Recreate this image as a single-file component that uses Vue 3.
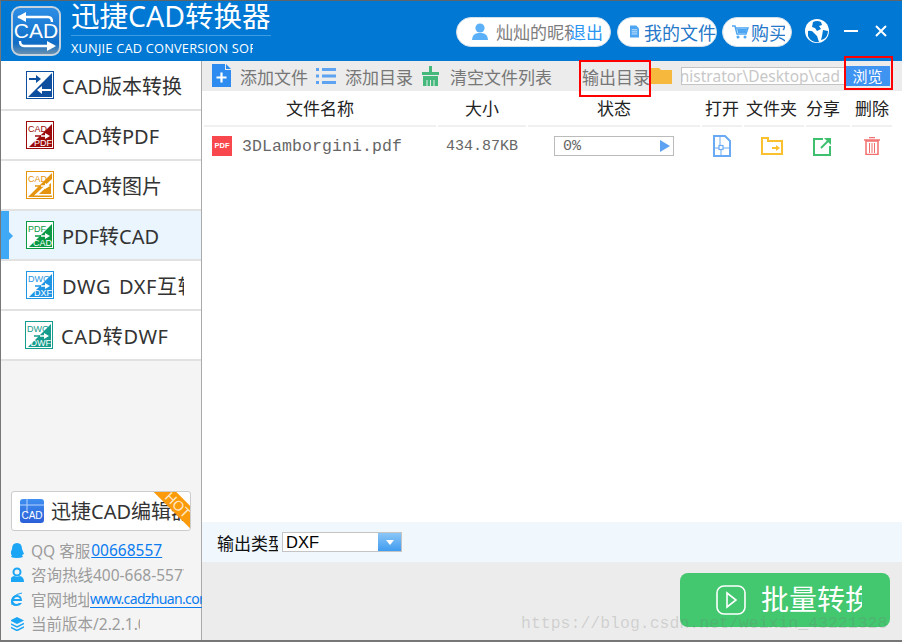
<script setup>
const menu = [
  { label: 'CAD版本转换', color: '#0d4f9e' },
  { label: 'CAD转PDF', color: '#9c0b0b', top: 'CAD', bottom: 'PDF' },
  { label: 'CAD转图片', color: '#e5940f', top: 'CAD', outline: true },
  { label: 'PDF转CAD', color: '#0b9a43', top: 'PDF', bottom: 'CAD', active: true },
  { label: 'DWG DXF互转', color: '#1f95e3', top: 'DWG', bottom: 'DXF', wide: true },
  { label: 'CAD转DWF', color: '#159c8c', top: 'DWG', bottom: 'DWF', shift: true, wide: true }
]

const columns = [
  { label: '文件名称', cls: 'c-name' },
  { label: '大小', cls: 'c-size' },
  { label: '状态', cls: 'c-state' },
  { label: '打开', cls: 'c-open' },
  { label: '文件夹', cls: 'c-dir' },
  { label: '分享', cls: 'c-share' },
  { label: '删除', cls: 'c-del' }
]
</script>

<template>
  <div class="win">
    <header class="head">
      <svg class="logo" width="50" height="50" viewBox="0 0 50 50">
        <defs>
          <linearGradient id="lg" x1="0" y1="0" x2="0" y2="1">
            <stop offset="0" stop-color="#2f8fe6" />
            <stop offset="0.75" stop-color="#0f6dc6" />
            <stop offset="1" stop-color="#6f93ae" />
          </linearGradient>
          <linearGradient id="eg" x1="0" y1="0" x2="0" y2="1">
            <stop offset="0" stop-color="#3f8ff0" />
            <stop offset="1" stop-color="#2a5fd8" />
          </linearGradient>
        </defs>
        <rect x="1" y="1" width="48" height="48" rx="8" fill="url(#lg)" stroke="#c5d3de" stroke-width="2" />
        <path d="M7 11h30q4 0 4 5" fill="none" stroke="#fff" stroke-width="2.400" />
        <path d="M6 11l9-5v10z" fill="#fff" />
        <path d="M43 40H13q-4 0-4-5" fill="none" stroke="#fff" stroke-width="2.400" />
        <path d="M45 40l-9-5v10z" fill="#fff" />
        <text x="25" y="32" text-anchor="middle" class="logo-txt">CAD</text>
      </svg>
      <div class="brand">
        <div class="brand-title">迅捷CAD转换器</div>
        <div class="brand-sub">XUNJIE CAD CONVERSION SOFTWARE</div>
      </div>
      <div class="pill pill-user">
        <svg width="16" height="18" viewBox="0 0 16 18"><circle cx="8" cy="5" r="4.600" fill="#5cb0f7" /><path d="M0 17q0-6 6-7h4q6 1 6 7z" fill="#5cb0f7" /></svg>
        <span class="nick">灿灿的昵称</span><span class="logout">退出</span>
      </div>
      <div class="pill pill-files">
        <svg width="13" height="17" viewBox="0 0 13 17"><path d="M0 0h9l4 4v13H0z" fill="#4ea6f2" /><path d="M2.500 6h8M2.500 9h8M2.500 12h8" stroke="#fff" /></svg>
        <span class="pill-txt">我的文件</span>
      </div>
      <div class="pill pill-buy">
        <svg width="17" height="16" viewBox="0 0 17 16"><path d="M0 2h3l2 8h9l2-6H4" fill="none" stroke="#4ea6f2" stroke-width="1.500" /><path d="M5 5h10l-1 4H6z" fill="#4ea6f2" /><circle cx="6" cy="13" r="1.500" fill="#4ea6f2" /><circle cx="13" cy="13" r="1.500" fill="#4ea6f2" /></svg>
        <span class="pill-txt">购买</span>
      </div>
      <svg class="globe" width="24" height="24" viewBox="0 0 24 24">
        <circle cx="12" cy="12" r="12" fill="#fff" />
        <path d="M8 3q4-2 8 0l1 3-3 1 2 3-4 2-2-3-3-1zM3 12q4-1 6 2l3 3 2 6q-8 1-11-6zM18 11l5 1q0 5-4 8l-3 1 1-4z" fill="#0078d4" />
      </svg>
      <span class="win-min"></span>
      <svg class="win-x" width="14" height="14" viewBox="0 0 14 14"><path d="M2 2l10 10M12 2L2 12" stroke="#fff" stroke-width="2" /></svg>
    </header>

    <div class="body">
      <aside class="side">
        <nav class="menu">
          <div v-for="m in menu" :key="m.label" class="mi" :class="{ active: m.active, shift: m.shift, wide: m.wide }">
            <svg class="mi-icon" width="28" height="28" viewBox="0 0 28 28">
              <rect x="0.500" y="0.500" width="27" height="27" fill="#fff" :stroke="m.color" />
              <template v-if="m.top">
                <template v-if="m.outline">
                  <path d="M26 2L2 26h24z" :fill="m.color" />
                  <path d="M26 8L8 24.500h18z" fill="#fff" />
                  <path d="M25 12L13 23h12z" :fill="m.color" />
                </template>
                <path v-else d="M26 3L3 26h23z" :fill="m.color" />
                <text x="2" y="10.500" class="mi-tag" :fill="m.color">{{ m.top }}</text>
                <text v-if="m.bottom" x="26" y="25" text-anchor="end" class="mi-tag" fill="#fff">{{ m.bottom }}</text>
                <path d="M9 15h8" :stroke="m.color" stroke-width="1.500" />
                <path d="M15 15h5" stroke="#fff" stroke-width="1.500" />
                <path d="M19 12l5 3-5 3z" fill="#fff" />
              </template>
              <template v-else>
                <path d="M26 2L2 26h24z" :fill="m.color" />
                <path d="M3 8h8" :stroke="m.color" stroke-width="2" />
                <path d="M10 4l5 4-5 4z" :fill="m.color" />
                <path d="M15 19h10" stroke="#fff" stroke-width="2" />
                <path d="M16 15l-5 4 5 4z" fill="#fff" />
              </template>
            </svg>
            <span class="mi-txt">{{ m.label }}</span>
          </div>
        </nav>

        <div class="side-foot">
          <div class="editor">
            <svg width="24" height="24" viewBox="0 0 24 24">
              <rect width="24" height="24" rx="3" fill="url(#eg)" />
              <path d="M7 0v14M0 6h24" stroke="#b7d3ff" />
              <text x="12" y="20" text-anchor="middle" class="ed-tag">CAD</text>
            </svg>
            <span class="editor-txt">迅捷CAD编辑器</span>
            <span class="hot"><span>HOT</span></span>
          </div>
          <ul class="info">
            <li>
              <svg width="14" height="15" viewBox="0 0 14 15"><path d="M7 0q5 0 5 6l2 5-2 1 1 2q-2 1-6 1t-6-1l1-2-2-1 2-5q0-6 5-6z" fill="#1ba5f5" /></svg>
              <span class="it">QQ 客服</span><a class="lk">00668557</a>
            </li>
            <li>
              <svg width="14" height="15" viewBox="0 0 14 15"><circle cx="7" cy="5" r="3.500" fill="none" stroke="#1ba5f5" stroke-width="2" /><path d="M0 15q0-5 4-6l3 1 3-1q4 1 4 6z" fill="#1ba5f5" /></svg>
              <span class="it it-tel">咨询热线400-668-5577</span>
            </li>
            <li>
              <svg width="14" height="15" viewBox="0 0 14 15"><path d="M2 9h10q0-6-5-6T1 9q0 5 5 5 4 0 6-3H9q-1 1-3 1-2 0-3-3zM4 7q1-2 3-2t3 2z" fill="#1ba5f5" fill-rule="evenodd" /><path d="M1 13Q0 3 12 1" fill="none" stroke="#1ba5f5" /></svg>
              <span class="it it-site">官网地址</span><a class="lk lk-site">www.cadzhuan.com</a>
            </li>
            <li>
              <svg width="14" height="14" viewBox="0 0 14 14"><path d="M7 0l7 3.500L7 7 0 3.500z" fill="#1ba5f5" /><path d="M0 6.500L7 10l7-3.500M0 10l7 3.500L14 10" fill="none" stroke="#1ba5f5" stroke-width="1.500" /></svg>
              <span class="it it-ver">当前版本/2.2.1.0</span>
            </li>
          </ul>
        </div>
      </aside>

      <main class="main">
        <div class="tools">
          <svg class="t-add" width="19" height="23" viewBox="0 0 19 23"><path d="M0 0h13v6h6v17H0z" fill="#2e8cf0" /><path d="M14 0l5 5h-5z" fill="#2e8cf0" /><path d="M4.500 13.500h10M9.500 8.500v10" stroke="#fff" stroke-width="2.200" /></svg>
          <span class="t-txt t1">添加文件</span>
          <svg class="t-list" width="20" height="16" viewBox="0 0 20 16"><path d="M0 0h3v3H0zM6 0h14v3H6zM0 6.500h3v3H0zM6 6.500h14v3H6zM0 13h3v3H0zM6 13h14v3H6z" fill="#5ea2f2" /></svg>
          <span class="t-txt t2">添加目录</span>
          <svg class="t-clear" width="17" height="20" viewBox="0 0 17 20"><path d="M7 0h3v6h7v3H0V6h7zM1 10h15v10H1z" fill="#45b97c" /><path d="M5 14v6M8.500 14v6M12 14v6" stroke="#ececec" /></svg>
          <span class="t-txt t3">清空文件列表</span>
          <span class="t-txt t4">输出目录</span>
          <svg class="t-folder" width="21" height="16" viewBox="0 0 21 16"><path d="M0 0h8l2 2h11v14H0z" fill="#f6b93e" /></svg>
          <div class="path"><span>C:\Users\Administrator\Desktop\cad</span></div>
          <div class="browse">浏览</div>
        </div>

        <div class="thead">
          <div v-for="c in columns" :key="c.label" class="th" :class="c.cls">{{ c.label }}</div>
        </div>

        <div class="row">
          <div class="c-name cell-name">
            <span class="pdf">PDF</span>
            <span class="fname">3DLamborgini.pdf</span>
          </div>
          <div class="c-size fsize">434.87KB</div>
          <div class="c-state">
            <div class="prog"><span>0%</span><i></i></div>
          </div>
          <div class="c-open act">
            <svg width="18" height="22" viewBox="0 0 18 22"><path d="M1 1h11l5 5v15H1z" fill="none" stroke="#69a9f5" stroke-width="2" /><path d="M7 1v10M1 13h5M10 13h7M8 15v6" stroke="#69a9f5" /><rect x="6" y="10.500" width="4" height="4" fill="none" stroke="#69a9f5" stroke-width="1.200" /></svg>
          </div>
          <div class="c-dir act">
            <svg width="22" height="18" viewBox="0 0 22 18"><path d="M1 1h6v3h14v13H1z" fill="none" stroke="#fbc02d" stroke-width="2" /><path d="M11 11h6" stroke="#fbc02d" stroke-width="2" /><path d="M15 8l4 3-4 3z" fill="#fbc02d" /></svg>
          </div>
          <div class="c-share act">
            <svg width="19" height="19" viewBox="0 0 19 19"><path d="M10 2H1v16h16V9" fill="none" stroke="#3fc06f" stroke-width="2" /><path d="M8 11l7-7" stroke="#3fc06f" stroke-width="2" /><path d="M11 1h7v7z" fill="#3fc06f" /></svg>
          </div>
          <div class="c-del act">
            <svg width="16" height="18" viewBox="0 0 16 18"><path d="M5 .5h6M0 3h16" stroke="#f26f6f" stroke-width="1.500" /><path d="M2 4h12v13.500H2z" fill="none" stroke="#f26f6f" stroke-width="1.500" /><path d="M5.500 6v10M8 6v10M10.500 6v10" stroke="#f26f6f" /></svg>
          </div>
        </div>

        <div class="spacer"></div>

        <div class="type-row">
          <span class="type-lbl">输出类型</span>
          <div class="select">
            <span class="sel-val">DXF</span>
            <span class="sel-btn"><i></i></span>
          </div>
        </div>

        <div class="foot">
          <div class="go">
            <svg width="30" height="30" viewBox="0 0 30 30"><rect x="1" y="1" width="28" height="28" rx="7" fill="none" stroke="#fff" stroke-width="1.600" /><path d="M11 8l9 7-9 7z" fill="none" stroke="#fff" stroke-width="1.600" /></svg>
            <span class="go-txt">批量转换</span>
          </div>
        </div>
      </main>
    </div>

    <div class="mark m-out"></div>
    <div class="mark m-browse"></div>
    <div class="wm">https://blog.csdn.net/weixin_43221328</div>
  </div>
</template>

<style>
html, body { margin: 0; background: #f4f4f4; }
</style>

<style scoped>
.win {
  position: relative;
  width: 902px;
  height: 642px;
  box-sizing: border-box;
  border-top: 1px solid #5f6468;
  border-left: 1px solid #777;
  border-bottom: 2px solid #777;
  display: flex;
  flex-direction: column;
  overflow: hidden;
  font-family: "Noto Sans", "Noto Sans CJK SC", sans-serif;
  color: #333;
}

/* title bar */
.head {
  height: 60px;
  flex: none;
  background: #0078d4;
  display: flex;
  align-items: center;
  padding-left: 10px;
}
.logo { flex: none; margin-top: -1px; }
.logo-txt { font: 21px "Liberation Sans", sans-serif; fill: #fff; }
.brand {
  width: 182px;
  margin-left: 10px;
  margin-top: -4px;
  color: #fff;
  white-space: nowrap;
  flex: none;
}
.brand-title {
  font-size: 28.500px;
  line-height: 31px;
  padding-bottom: 3px;
  border-bottom: 1px solid #3f9ce0;
  width: 200px;
}
.brand-sub {
  font: 12.800px/20px "Open Sans", sans-serif;
  letter-spacing: 0.2px;
  margin-top: 2px;
  overflow: hidden;
}
.pill {
  height: 30px;
  box-sizing: border-box;
  background: #fff;
  border: 1px solid #d2dfe9;
  border-radius: 15px;
  display: flex;
  align-items: center;
  overflow: hidden;
  white-space: nowrap;
  flex: none;
  margin-top: 1px;
}
.pill-user { width: 155px; margin-left: 203px; padding-left: 15px; font-size: 17px; }
.nick { width: 76px; margin-left: 8px; color: #7d7d7d; overflow: hidden; flex: none; }
.logout { color: #2b96f1; margin-left: -3px; }
.pill-files { width: 100px; margin-left: 6px; padding-left: 12px; }
.pill-buy { width: 70px; margin-left: 5px; padding-left: 9px; }
.pill-txt { color: #2578c9; font-size: 18px; margin-left: 5px; overflow: hidden; }
.pill-files .pill-txt { flex: none; }
.pill-buy .pill-txt { width: 34px; margin-left: 2px; flex: none; }
.globe { margin-left: 13px; flex: none; }
.win-min {
  width: 14px;
  height: 2px;
  background: #fff;
  margin-left: 15px;
  flex: none;
}
.win-x { margin-left: 16px; flex: none; }

.body { flex: 1; display: flex; min-height: 0; }

/* left column */
.side {
  width: 200px;
  flex: none;
  background: #f4f4f4;
  border-right: 1px solid #aaa;
  display: flex;
  flex-direction: column;
  justify-content: space-between;
}
.mi {
  height: 48px;
  border-bottom: 2px solid #e2e2e2;
  background: #fff;
  display: flex;
  align-items: center;
  padding-left: 25px;
  position: relative;
}
.mi.shift { padding-left: 24px; }
.mi.active { background: #eaf5fe; }
.mi.active::before {
  content: "";
  position: absolute;
  left: 0;
  top: 0;
  bottom: 0;
  width: 8px;
  background: #3fa9f5;
}
.mi.active::after {
  content: "";
  position: absolute;
  left: 8px;
  top: 21px;
  border: 4px solid transparent;
  border-left-color: #3fa9f5;
}
.mi-icon { flex: none; }
.mi-tag { font: 9px "Liberation Sans", sans-serif; }
.mi-txt {
  margin-left: 8px;
  width: 122px;
  font-size: 20px;
  white-space: nowrap;
  overflow: hidden;
  color: #333;
}
.mi.wide .mi-txt { letter-spacing: 0.6px; word-spacing: 2px; }
.side-foot { padding: 0 0 5px 10px; }
.editor {
  width: 180px;
  height: 40px;
  box-sizing: border-box;
  border: 1px solid #ccc;
  border-radius: 3px;
  background: #fff;
  display: flex;
  align-items: center;
  padding-left: 8px;
  position: relative;
  overflow: hidden;
  white-space: nowrap;
}
.ed-tag { font: 10px "Liberation Sans", sans-serif; fill: #fff; }
.editor-txt {
  font-size: 20px;
  margin-left: 7px;
  margin-top: -2px;
  width: 132px;
  overflow: hidden;
  color: #333;
  flex: none;
}
.hot {
  position: absolute;
  right: -23px;
  top: 5px;
  width: 70px;
  height: 16px;
  background: #fb9b0b;
  transform: rotate(45deg);
  text-align: center;
  color: #ffe9c9;
  font: 14px/16px "Liberation Sans", sans-serif;
}
.info {
  list-style: none;
  margin: 8px 0 0;
  padding: 0;
  height: 96px;
  display: flex;
  flex-direction: column;
  justify-content: space-between;
}
.info li {
  height: 22px;
  display: flex;
  align-items: center;
  white-space: nowrap;
  font-size: 15.500px;
  color: #9c9c9c;
  overflow: hidden;
  width: 191px;
}
.info svg { flex: none; width: 14px; margin-left: -1px; }
.it { margin-left: 7px; flex: none; }
.lk { color: #0a7cf0; text-decoration: underline; margin-left: 1px; }
.it-tel { width: 153px; overflow: hidden; }
.it-site { width: 58px; overflow: hidden; }
.lk-site { font-size: 14px; letter-spacing: -0.65px; margin-left: 1px; text-decoration: none; border-bottom: 1px solid #0a7cf0; line-height: 16px; }
.it-ver { width: 109px; overflow: hidden; }

/* right column */
.main { flex: 1; display: flex; flex-direction: column; min-width: 0; background: #fff; }
.tools {
  height: 30px;
  flex: none;
  background: #ececec;
  display: flex;
  align-items: center;
  padding-left: 10px;
  white-space: nowrap;
}
.t-txt { font-size: 17px; color: #777; flex: none; margin-top: 1px; }
.t-add { flex: none; margin-top: -1px; }
.t1 { margin-left: 9px; width: 67px; }
.t-list { margin-left: 9px; flex: none; }
.t2 { margin-left: 9px; width: 67px; }
.t-clear { margin-left: 10px; flex: none; }
.t3 { margin-left: 11px; width: 102px; }
.t4 { margin-left: 30px; width: 67px; }
.t-folder { margin-left: 2px; flex: none; }
.path {
  width: 164px;
  height: 18px;
  box-sizing: border-box;
  margin-left: 9px;
  border: 1px solid #c4c4c4;
  background: #fff;
  color: #c8c8c8;
  font: 15.500px/16px "Noto Sans", sans-serif;
  overflow: hidden;
  display: flex;
  justify-content: flex-end;
  padding-right: 4px;
  flex: none;
}
.path span { flex: none; }
.browse {
  width: 45px;
  height: 20px;
  background: #3f93f1;
  color: #fff;
  font-size: 15px;
  line-height: 20px;
  text-align: center;
  flex: none;
}

.thead {
  height: 36px;
  flex: none;
  display: flex;
  padding-left: 2px;
}
.th {
  height: 36px;
  line-height: 35px;
  box-sizing: border-box;
  border-bottom: 2px solid #f0f0f0;
  text-align: center;
  font-size: 17px;
  color: #222;
  margin-right: 2px;
  white-space: nowrap;
}
.c-name { width: 232px; flex: none; }
.c-size { width: 88px; flex: none; }
.c-state { width: 172px; flex: none; }
.c-open { width: 40px; flex: none; }
.c-dir { width: 60px; flex: none; box-sizing: border-box; }
.c-share { width: 44px; flex: none; box-sizing: border-box; }
.c-del { width: 40px; flex: none; }
.th.c-dir { text-align: left; padding-left: 2px; }
.th.c-share { text-align: left; }
.act.c-dir { padding-right: 4px; }
.act.c-share { padding-right: 12px; }

.row {
  height: 38px;
  flex: none;
  display: flex;
  align-items: center;
  padding-left: 2px;
  gap: 2px;
}
.cell-name { display: flex; align-items: center; padding-left: 8px; box-sizing: border-box; }
.pdf {
  width: 20px;
  height: 20px;
  background: #f9474e;
  color: #fff;
  font: 700 7.500px/20px "Liberation Sans", sans-serif;
  text-align: center;
  flex: none;
}
.fname {
  margin-left: 10px;
  font: 16.500px "Liberation Mono", monospace;
  letter-spacing: 0.1px;
  color: #666;
}
.fsize { font: 15px "Liberation Mono", monospace; color: #666; text-align: center; }
.prog {
  width: 120px;
  height: 20px;
  box-sizing: border-box;
  margin-left: 26px;
  border: 1px solid #bbb;
  display: flex;
  align-items: center;
  justify-content: space-between;
  padding: 0 3px 0 8px;
  font: 15px "Liberation Mono", monospace;
  color: #666;
}
.prog i {
  border-left: 10px solid #5ea2f2;
  border-top: 6.500px solid transparent;
  border-bottom: 6.500px solid transparent;
}
.act { display: flex; justify-content: center; align-items: center; }

.spacer { flex: 1; }
.type-row {
  height: 40px;
  flex: none;
  background: #f0f8fe;
  display: flex;
  align-items: center;
  padding-left: 15px;
}
.type-lbl {
  width: 61px;
  overflow: hidden;
  white-space: nowrap;
  font-size: 17px;
  color: #111;
  flex: none;
}
.select {
  width: 120px;
  height: 20px;
  box-sizing: border-box;
  margin-left: 4px;
  border: 1px solid #c4c4c4;
  background: #fff;
  display: flex;
  justify-content: space-between;
}
.sel-val { font: 16.500px/18px "Liberation Sans", sans-serif; color: #000; padding-left: 3px; }
.sel-btn {
  width: 23px;
  background: linear-gradient(#8cc6f7, #3f9cf0);
  display: flex;
  align-items: center;
  justify-content: center;
}
.sel-btn i {
  border-top: 5px solid #fff;
  border-left: 4px solid transparent;
  border-right: 4px solid transparent;
}
.foot {
  height: 78px;
  flex: none;
  background: #ececec;
  padding: 11px 0 0 478px;
  box-sizing: border-box;
}
.go {
  width: 210px;
  height: 54px;
  background: #43c76f;
  border-radius: 8px;
  display: flex;
  align-items: center;
  padding-left: 36px;
  box-sizing: border-box;
  white-space: nowrap;
  overflow: hidden;
}
.go-txt {
  width: 101px;
  margin-left: 15px;
  margin-top: -5px;
  font-size: 28px;
  color: #fff;
  overflow: hidden;
  flex: none;
}

/* overlays */
.mark { position: absolute; border: 2px solid #f00; box-sizing: border-box; }
.m-out { left: 578px; top: 59px; width: 72px; height: 37px; }
.m-browse { left: 843px; top: 55px; width: 49px; height: 34px; }
.wm {
  position: absolute;
  left: 520px;
  top: 613px;
  font: 16.500px "Liberation Mono", monospace;
  color: rgba(120, 120, 120, 0.25);
  white-space: nowrap;
}
</style>
